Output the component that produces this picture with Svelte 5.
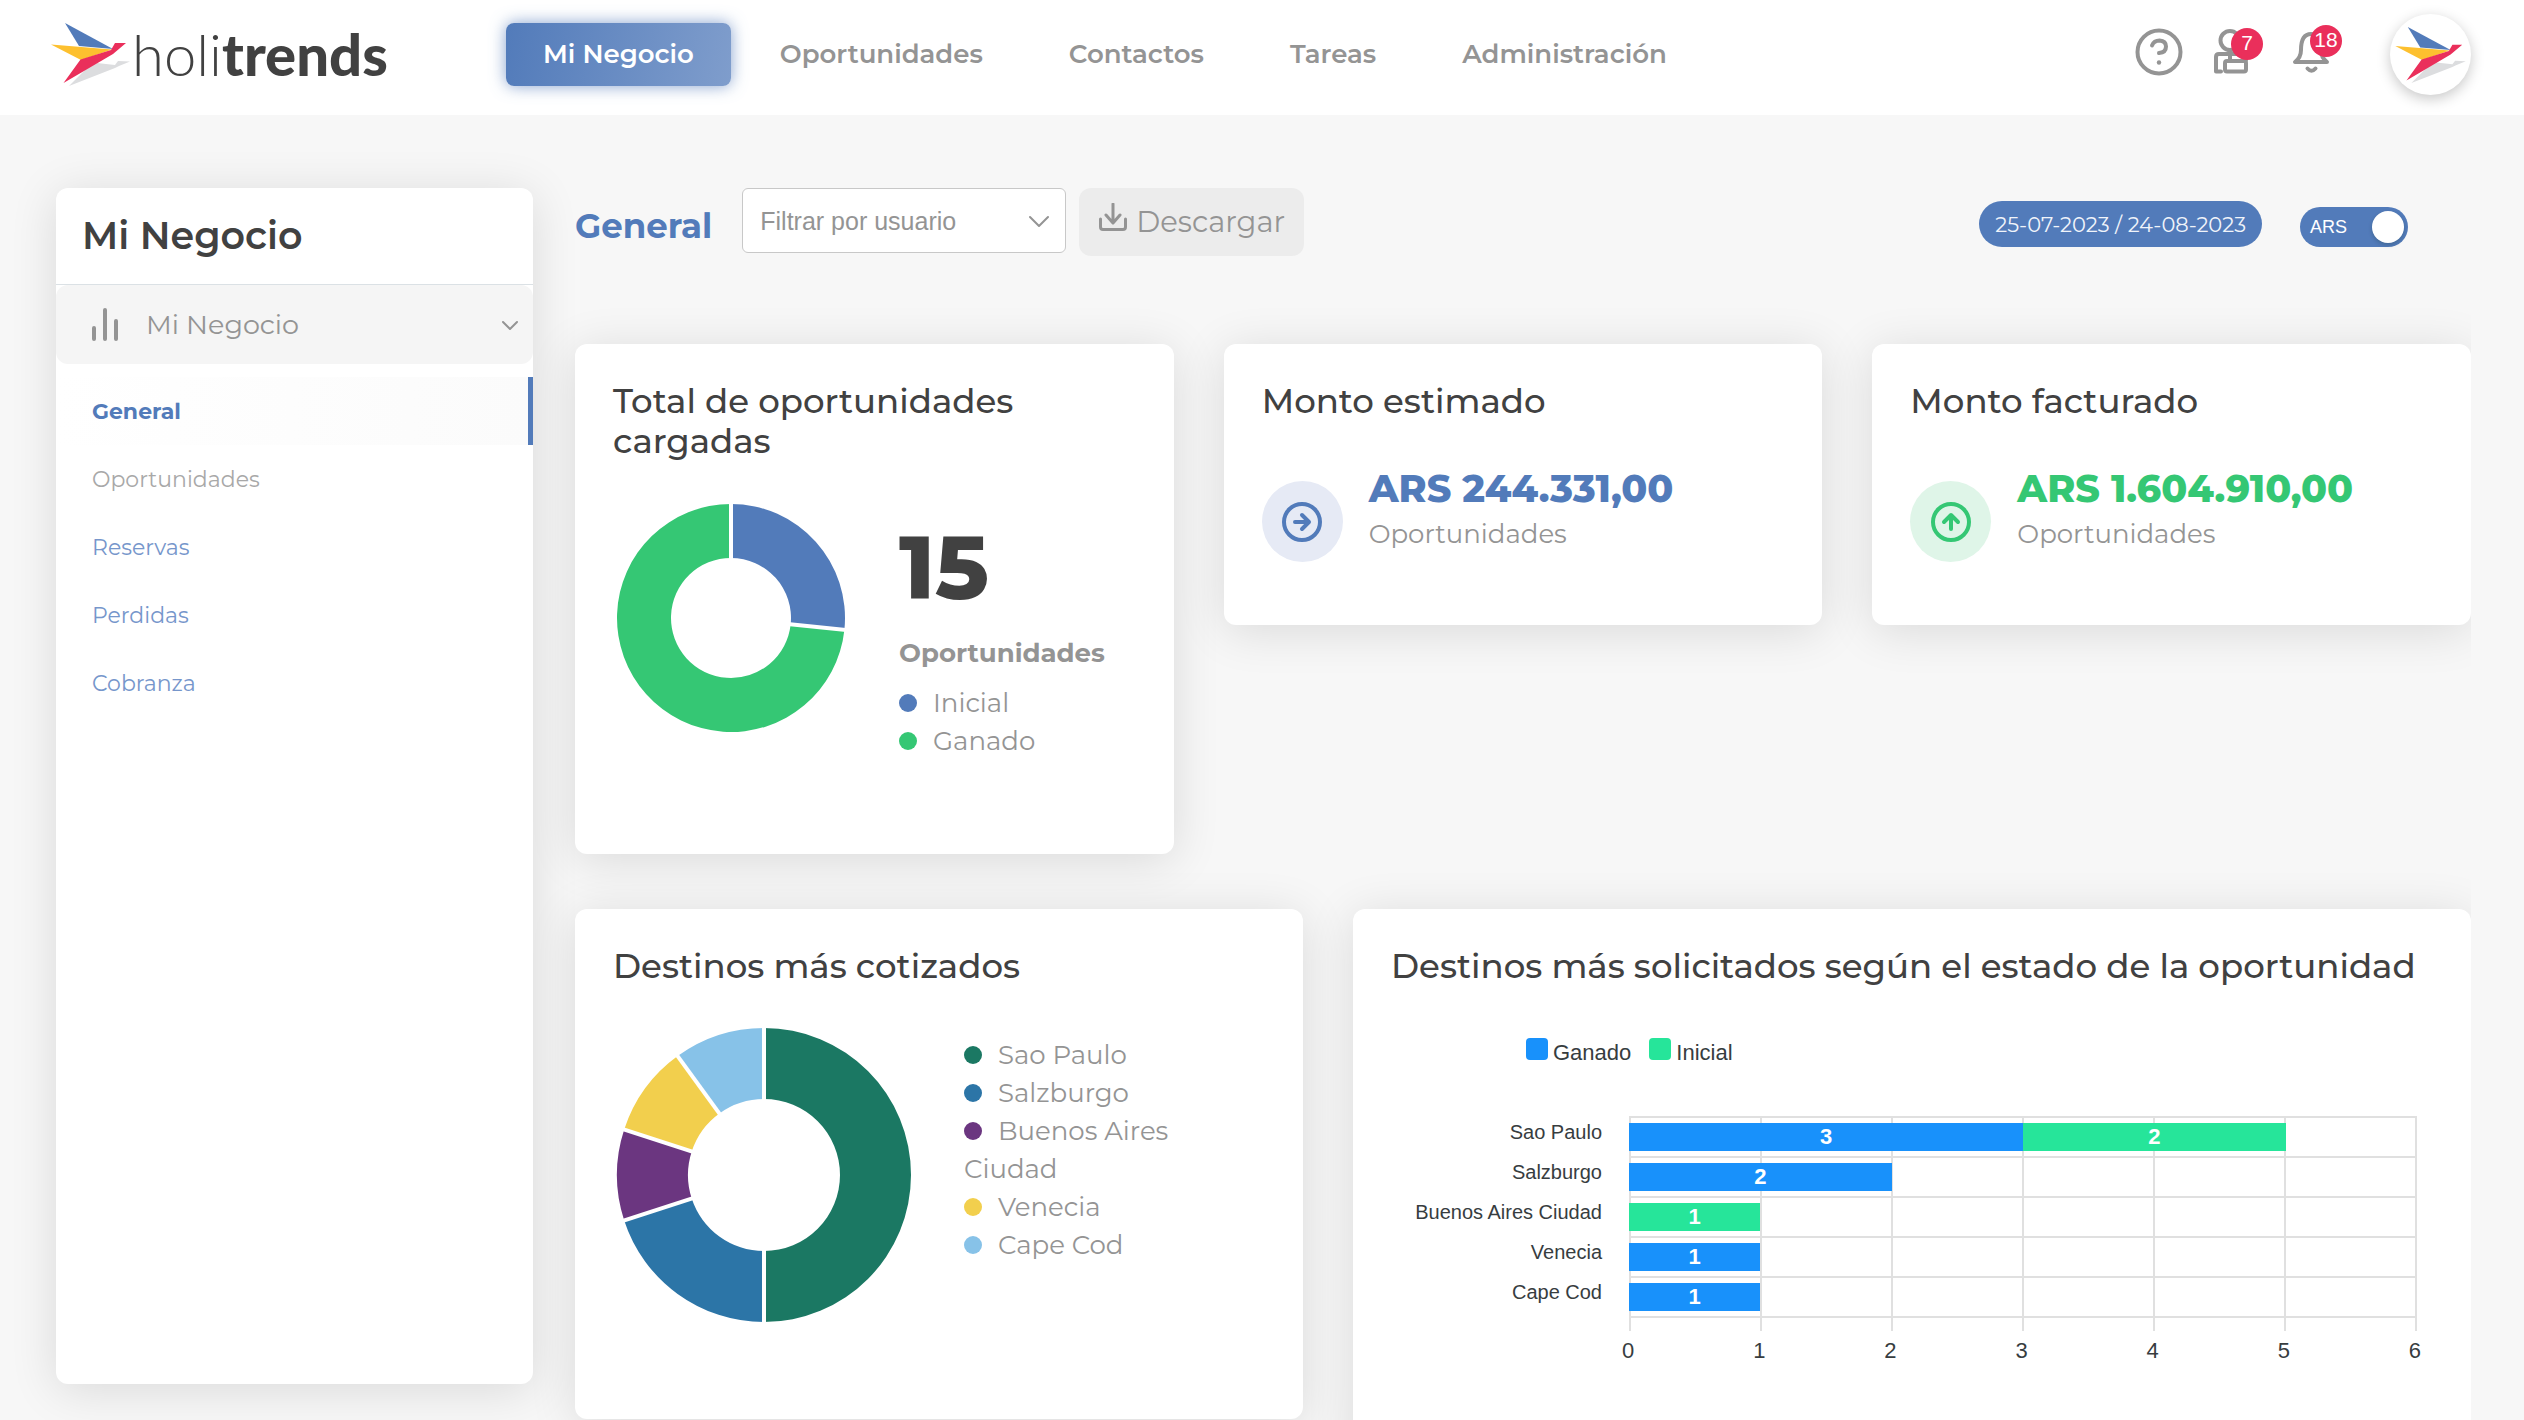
<script>
  const nav = ['Mi Negocio', 'Oportunidades', 'Contactos', 'Tareas', 'Administración'];
  const side = [
    { name: 'General', kind: 'active' },
    { name: 'Oportunidades', kind: 'muted' },
    { name: 'Reservas', kind: '' },
    { name: 'Perdidas', kind: '' },
    { name: 'Cobranza', kind: '' }
  ];
  const totals = [
    { name: 'Inicial', value: 4, color: '#527bba' },
    { name: 'Ganado', value: 11, color: '#35c774' }
  ];
  const quoted = [
    { name: 'Sao Paulo', value: 5, color: '#1b7863' },
    { name: 'Salzburgo', value: 2, color: '#2c75a7' },
    { name: 'Buenos Aires Ciudad', value: 1, color: '#6b3680' },
    { name: 'Venecia', value: 1, color: '#f2cf4d' },
    { name: 'Cape Cod', value: 1, color: '#87c2e8' }
  ];
  const amounts = [
    { title: 'Monto estimado', amount: 'ARS 244.331,00', tone: 'blue', arrow: 'M13 20h13M20 13l7 7-7 7' },
    { title: 'Monto facturado', amount: 'ARS 1.604.910,00', tone: 'green', arrow: 'M20 27V14M13 20l7-7 7 7' }
  ];
  const max = 6;
  const ticks = [0, 1, 2, 3, 4, 5, 6];
  const rows = [
    { name: 'Sao Paulo', won: 3, open: 2 },
    { name: 'Salzburgo', won: 2, open: 0 },
    { name: 'Buenos Aires Ciudad', won: 0, open: 1 },
    { name: 'Venecia', won: 1, open: 0 },
    { name: 'Cape Cod', won: 1, open: 0 }
  ];

  // Ring segments, clockwise from twelve o'clock, centred on the origin.
  function ring(items, outer, inner) {
    const sum = items.reduce((n, i) => n + i.value, 0);
    let from = 0;
    return items.map((item) => {
      const to = from + (item.value / sum) * Math.PI * 2;
      const at = (a, r) => `${(Math.sin(a) * r).toFixed(2)} ${(-Math.cos(a) * r).toFixed(2)}`;
      const large = to - from > Math.PI ? 1 : 0;
      const d = `M${at(from, outer)}A${outer} ${outer} 0 ${large} 1 ${at(to, outer)}L${at(to, inner)}A${inner} ${inner} 0 ${large} 0 ${at(from, inner)}Z`;
      const cut = `M${at(from, inner - 3)}L${at(from, outer + 3)}`;
      from = to;
      return { d, cut, color: item.color };
    });
  }
  const totalRing = ring(totals, 114, 60);
  const quotedRing = ring(quoted, 147, 76);

  let byArs = $state(true);
</script>

{#snippet bird()}
  <svg class="bird" viewBox="0 0 80 65" aria-hidden="true">
    <path d="M18 64 35 47 46 41 64 43 67 39 79 39.500 68 44 64 46Z" fill="#dcdddf" />
    <path d="M14 1 62 27 28 24Z" fill="#527bba" />
    <path d="M0 22.500 61 27.500 30 38Z" fill="#fdc02f" />
    <path d="M64 21H75L62 32 12.500 61 29.500 37.500 60 28Z" fill="#ea2f5b" />
  </svg>
{/snippet}

{#snippet donut(segments, size)}
  <svg class="donut" width={size} height={size} viewBox="{-size / 2} {-size / 2} {size} {size}" aria-hidden="true">
    {#each segments as s}<path d={s.d} fill={s.color} />{/each}
    {#each segments as s}<path d={s.cut} stroke="#fff" stroke-width="4" />{/each}
  </svg>
{/snippet}

{#snippet legend(items)}
  <ul class="legend">
    {#each items as item}
      <li><span class="dot" style="background:{item.color}"></span>{item.name}</li>
    {/each}
  </ul>
{/snippet}

<div class="app">
  <header>
    <a class="brand" href="#inicio" aria-label="holitrends">
      {@render bird()}
      <span class="word">holi<b>trends</b></span>
    </a>
    <nav>
      {#each nav as item, i}
        <a href="#{item}" class:current={i === 0}>{item}</a>
      {/each}
    </nav>
    <div class="tools">
      <button class="icon" aria-label="Ayuda">
        <svg width="48" height="48" viewBox="0 0 48 48">
          <circle cx="24" cy="24" r="21.500" />
          <path d="M17 17.500q2-5 7.500-5 6.500.5 6.500 6 0 6-7 6.500" />
          <circle cx="24" cy="34.500" r="2.200" class="solid" />
        </svg>
      </button>
      <button class="icon" aria-label="Clientes">
        <svg width="38" height="48" viewBox="0 0 38 48">
          <circle cx="17" cy="12.500" r="9.500" />
          <path d="M8 43.500H3V29q0-3 3-3h24q3 0 3 3v3" />
          <path d="M17 32v-5" />
          <rect x="12" y="33" width="21" height="10.500" rx="2" />
        </svg>
        <span class="badge">7</span>
      </button>
      <button class="icon bell" aria-label="Notificaciones">
        <svg width="38" height="48" viewBox="0 0 38 48">
          <path d="M3 37h32c-4-3-6-6-6-12 0-10-3-16-10-16S9 15 9 25c0 6-2 9-6 12Z" />
          <path d="M15.500 43.500q4 4.500 8 0" />
        </svg>
        <span class="badge">18</span>
      </button>
      <button class="avatar" aria-label="Cuenta">{@render bird()}</button>
    </div>
  </header>

  <div class="page">
    <aside>
      <h2>Mi Negocio</h2>
      <button class="group">
        <svg width="28" height="36" viewBox="0 0 28 36"><path d="M3 21v11M14 3v29M25 14v18" /></svg>
        <span>Mi Negocio</span>
        <svg width="18" height="12" viewBox="0 0 18 12" class="thin"><path d="m2 3 7 7 7-7" /></svg>
      </button>
      <div class="links">
        {#each side as item}
          <a href="#{item.name}" class={item.kind}>{item.name}</a>
        {/each}
      </div>
    </aside>

    <main>
      <div class="bar">
        <h1>General</h1>
        <div class="pick">
          <select aria-label="Filtrar por usuario">
            <option>Filtrar por usuario</option>
          </select>
          <svg width="20" height="14" viewBox="0 0 20 14" aria-hidden="true"><path d="m1 2 9 9 9-9" /></svg>
        </div>
        <button class="download">
          <svg width="28" height="28" viewBox="0 0 28 28" aria-hidden="true">
            <path d="M14 1v18M7 12l7 8 7-8M1.500 16v8q0 2.500 2.500 2.500h20q2.500 0 2.500-2.500v-8" />
          </svg>
          <span>Descargar</span>
        </button>
        <button class="dates">25-07-2023 / 24-08-2023</button>
        <label class="switch">
          <span>ARS</span>
          <input type="checkbox" role="switch" bind:checked={byArs} />
        </label>
      </div>

      <div class="cards top">
        <section class="card tall">
          <h3>Total de oportunidades cargadas</h3>
          <div class="chart total">
            {@render donut(totalRing, 230)}
            <div class="figures">
              <strong>15</strong>
              <b>Oportunidades</b>
              {@render legend(totals)}
            </div>
          </div>
        </section>
        {#each amounts as item}
          <section class="card short {item.tone}">
            <h3>{item.title}</h3>
            <div class="money">
              <span class="disc">
                <svg width="40" height="40" viewBox="0 0 40 40" aria-hidden="true">
                  <circle cx="20" cy="20" r="18" />
                  <path d={item.arrow} />
                </svg>
              </span>
              <div>
                <strong>{item.amount}</strong>
                <p>Oportunidades</p>
              </div>
            </div>
          </section>
        {/each}
      </div>

      <div class="cards bottom">
        <section class="card tall">
          <h3>Destinos más cotizados</h3>
          <div class="chart quoted">
            {@render donut(quotedRing, 296)}
            {@render legend(quoted)}
          </div>
        </section>
        <section class="card status">
          <h3>Destinos más solicitados según el estado de la oportunidad</h3>
          <div class="keys">
            <span><i class="won"></i>Ganado</span>
            <span><i class="open"></i>Inicial</span>
          </div>
          <div class="plot">
            <div class="names">
              {#each rows as row}<span>{row.name}</span>{/each}
            </div>
            <div class="area">
              <div class="grid">{#each ticks.slice(1) as t}<span></span>{/each}</div>
              <div class="rows">
                {#each rows as row}
                  <div class="row">
                    {#if row.won}<span class="won" style="width:{(row.won / max) * 100}%">{row.won}</span>{/if}
                    {#if row.open}<span class="open" style="width:{(row.open / max) * 100}%">{row.open}</span>{/if}
                  </div>
                {/each}
              </div>
            </div>
            <div class="axis">{#each ticks as t}<span>{t}</span>{/each}</div>
          </div>
        </section>
      </div>
    </main>
  </div>
</div>

<style>
  :global(body) { background: #f7f7f7; }
  .app {
    height: 100vh;
    min-height: 900px;
    overflow: hidden;
    background: #f7f7f7;
    color: #949494;
    font-family: Montserrat, Inter, sans-serif;
    font-size: 26px;
  }
  .app :global(*) { box-sizing: border-box; }
  h1, h2, h3, p, ul { margin: 0; padding: 0; }
  a { text-decoration: none; color: inherit; }
  button { border: 0; padding: 0; background: none; font: inherit; color: inherit; cursor: pointer; }
  svg { display: block; flex: none; fill: none; stroke: currentColor; stroke-linecap: round; stroke-linejoin: round; }
  .bird, .donut { stroke: none; }
  .donut { stroke-linecap: butt; }

  header { display: flex; align-items: flex-start; height: 115px; padding: 0 53px 0 51px; background: #fff; }
  .brand { display: flex; gap: 1px; width: 455px; padding-top: 22px; color: #414141; }
  .brand .bird { width: 80px; height: 65px; }
  .word { font: 300 58px/64px Lato, sans-serif; }
  .word b { font-weight: 900; }
  nav { display: flex; gap: 12px; padding-top: 23px; }
  nav a { padding: 0 37px; border-radius: 8px; font-weight: 600; line-height: 63px; }
  nav .current { color: #fff; background: linear-gradient(100deg, #527bba, #7f9dcc); box-shadow: 0 0 16px rgba(82, 123, 186, .7); }
  .tools { display: flex; margin-left: auto; padding-top: 14px; }
  .icon { position: relative; display: block; height: 48px; margin: 14px 30px 0 0; }
  .icon svg { stroke-width: 4; }
  .solid { fill: currentColor; stroke: none; }
  .icon.bell { margin: 11px 60px 0 11px; }
  .badge { position: absolute; top: 0; right: -12px; width: 32px; height: 32px; border-radius: 50%; background: #ea2f5b; color: #fff; font: 21px/29px "Liberation Sans", sans-serif; text-align: center; }
  .avatar { display: grid; place-items: center; width: 81px; height: 81px; border-radius: 50%; background: #fff; box-shadow: 0 4px 14px rgba(0, 0, 0, .22); }
  .avatar .bird { width: 72px; height: 58px; }

  .page { display: grid; grid-template-columns: 477px minmax(0, 1fr); grid-template-rows: minmax(0, 1fr); gap: 42px; height: calc(100% - 115px); padding: 73px 53px 0 56px; }
  aside { height: calc(100% - 36px); border-radius: 12px; background: #fff; box-shadow: 0 6px 48px rgba(0, 0, 0, .12); }
  h2 { padding: 0 26px; border-bottom: 1px solid #dbe1e5; color: #414141; font-size: 38px; font-weight: 600; line-height: 96px; }
  .group { display: flex; align-items: center; width: 100%; height: 79px; padding: 0 14px 0 35px; border-radius: 12px; background: #f5f5f5; font-size: 27px; }
  .group span { flex: 1; padding-left: 27px; text-align: left; }
  .group svg { stroke-width: 4; }
  .group .thin { stroke-width: 2; }
  .links { padding-top: 13px; font-size: 22px; }
  .links a { display: block; padding: 2px 0 0 36px; color: #7696cb; line-height: 66px; }
  .links .muted { color: #a8a8a8; }
  .links .active { border-right: 5px solid #527bba; background: linear-gradient(90deg, #fff, #fbfbfb); color: #527bba; font-weight: 700; }

  main { min-width: 0; clip-path: inset(-60px 0 -60px -42px); }
  .bar { display: flex; align-items: flex-start; height: 156px; }
  h1 { padding-right: 30px; color: #527bba; font-size: 34px; font-weight: 700; line-height: 76px; }
  .pick { position: relative; width: 324px; margin-right: 13px; }
  select { appearance: none; width: 100%; height: 65px; padding: 0 17px; border: 1px solid #c8c8c8; border-radius: 6px; background: #fff; color: #949494; font: 25px "Liberation Sans", sans-serif; }
  .pick svg { position: absolute; top: 27px; right: 17px; stroke-width: 2; }
  .download { display: flex; align-items: flex-start; gap: 9px; height: 68px; padding: 15px 19px 0 20px; border-radius: 12px; background: #ececec; font-size: 29px; line-height: 38px; }
  .download svg { stroke-width: 3; }
  .dates { height: 46px; margin: 13px 38px 0 auto; padding: 0 16px; border-radius: 23px; background: #527bba; color: #f0f4fa; font-size: 21px; }
  .switch { display: flex; align-items: center; justify-content: space-between; width: 108px; height: 40px; margin: 19px 63px 0 0; padding: 0 4px 0 10px; border-radius: 20px; background: #527bba; color: #fff; font: 18px "Liberation Sans", sans-serif; }
  input { appearance: none; width: 32px; height: 32px; margin: 0; border-radius: 50%; background: #fff; box-shadow: 0 2px 4px rgba(0, 35, 11, .2); }

  .cards { display: grid; gap: 50px; align-items: start; }
  .top { grid-template-columns: repeat(3, minmax(0, 1fr)); margin-bottom: 55px; }
  .bottom { grid-template-columns: minmax(0, 728fr) minmax(0, 1118fr); }
  .card { padding: 37px 38px; border-radius: 12px; background: #fff; box-shadow: 0 6px 48px rgba(0, 0, 0, .12); }
  .tall { min-height: 510px; }
  .short { min-height: 281px; }
  h3 { color: #414141; font-size: 34px; font-weight: 500; line-height: 40px; }
  .chart { display: flex; align-items: flex-start; }
  .total { gap: 53px; padding: 42px 0 0 3px; }
  .figures { display: flex; flex-direction: column; padding-top: 11px; }
  .figures strong { color: #414141; font-size: 89px; font-weight: 800; line-height: 106px; }
  .figures b { margin-bottom: 12px; padding-top: 14px; font-weight: 700; line-height: 38px; }
  .legend { list-style: none; line-height: 38px; }
  .dot { display: inline-block; width: 18px; height: 18px; margin-right: 16px; border-radius: 50%; }
  .quoted { gap: 52px; padding: 41px 0 0 3px; }
  .quoted .legend { width: 230px; padding-top: 9px; }
  .money { display: flex; gap: 26px; padding-top: 45px; }
  .disc { display: grid; place-items: center; width: 81px; height: 81px; margin-top: 15px; border-radius: 50%; }
  .disc svg { stroke-width: 4; }
  .money strong { font-size: 38px; font-weight: 800; line-height: 46px; }
  .money p { line-height: 44px; }
  .blue strong, .blue .disc { color: #527bba; }
  .green strong, .green .disc { color: #35c774; }
  .blue .disc { background: #e6eaf5; }
  .green .disc { background: #dff5e8; }

  .status { min-height: 560px; color: #373d3f; font: 20px "Liberation Sans", sans-serif; }
  .status h3 { font-family: Montserrat, Inter, sans-serif; white-space: nowrap; }
  .keys { display: flex; gap: 18px; padding: 52px 0 0 135px; font-size: 22px; line-height: 30px; }
  .keys span { display: flex; gap: 5px; }
  .keys i { width: 22px; height: 22px; border-radius: 4px; }
  .won { background: #1891fb; }
  .open { background: #26e59a; }
  .plot { display: grid; grid-template-columns: 211px minmax(0, 1fr); column-gap: 27px; padding: 48px 16px 0 0; }
  .names { display: flex; flex-direction: column; text-align: right; white-space: nowrap; }
  .names span { height: 40px; line-height: 32px; }
  .area { display: grid; border-top: 2px solid #e0e0e0; }
  .grid, .rows { grid-area: 1 / 1; }
  .grid { display: flex; height: 213px; border-right: 2px solid #e0e0e0; }
  .grid span { flex: 1; border-left: 2px solid #e0e0e0; }
  .row { display: flex; height: 40px; padding: 5px 0; border-bottom: 2px solid #e0e0e0; }
  .row span { height: 28px; color: #fff; font-size: 22px; font-weight: 700; line-height: 28px; text-align: center; }
  .axis { grid-column: 2; display: flex; justify-content: space-between; margin: 4px -4px 0 -7px; font-size: 22px; line-height: 32px; }
</style>
